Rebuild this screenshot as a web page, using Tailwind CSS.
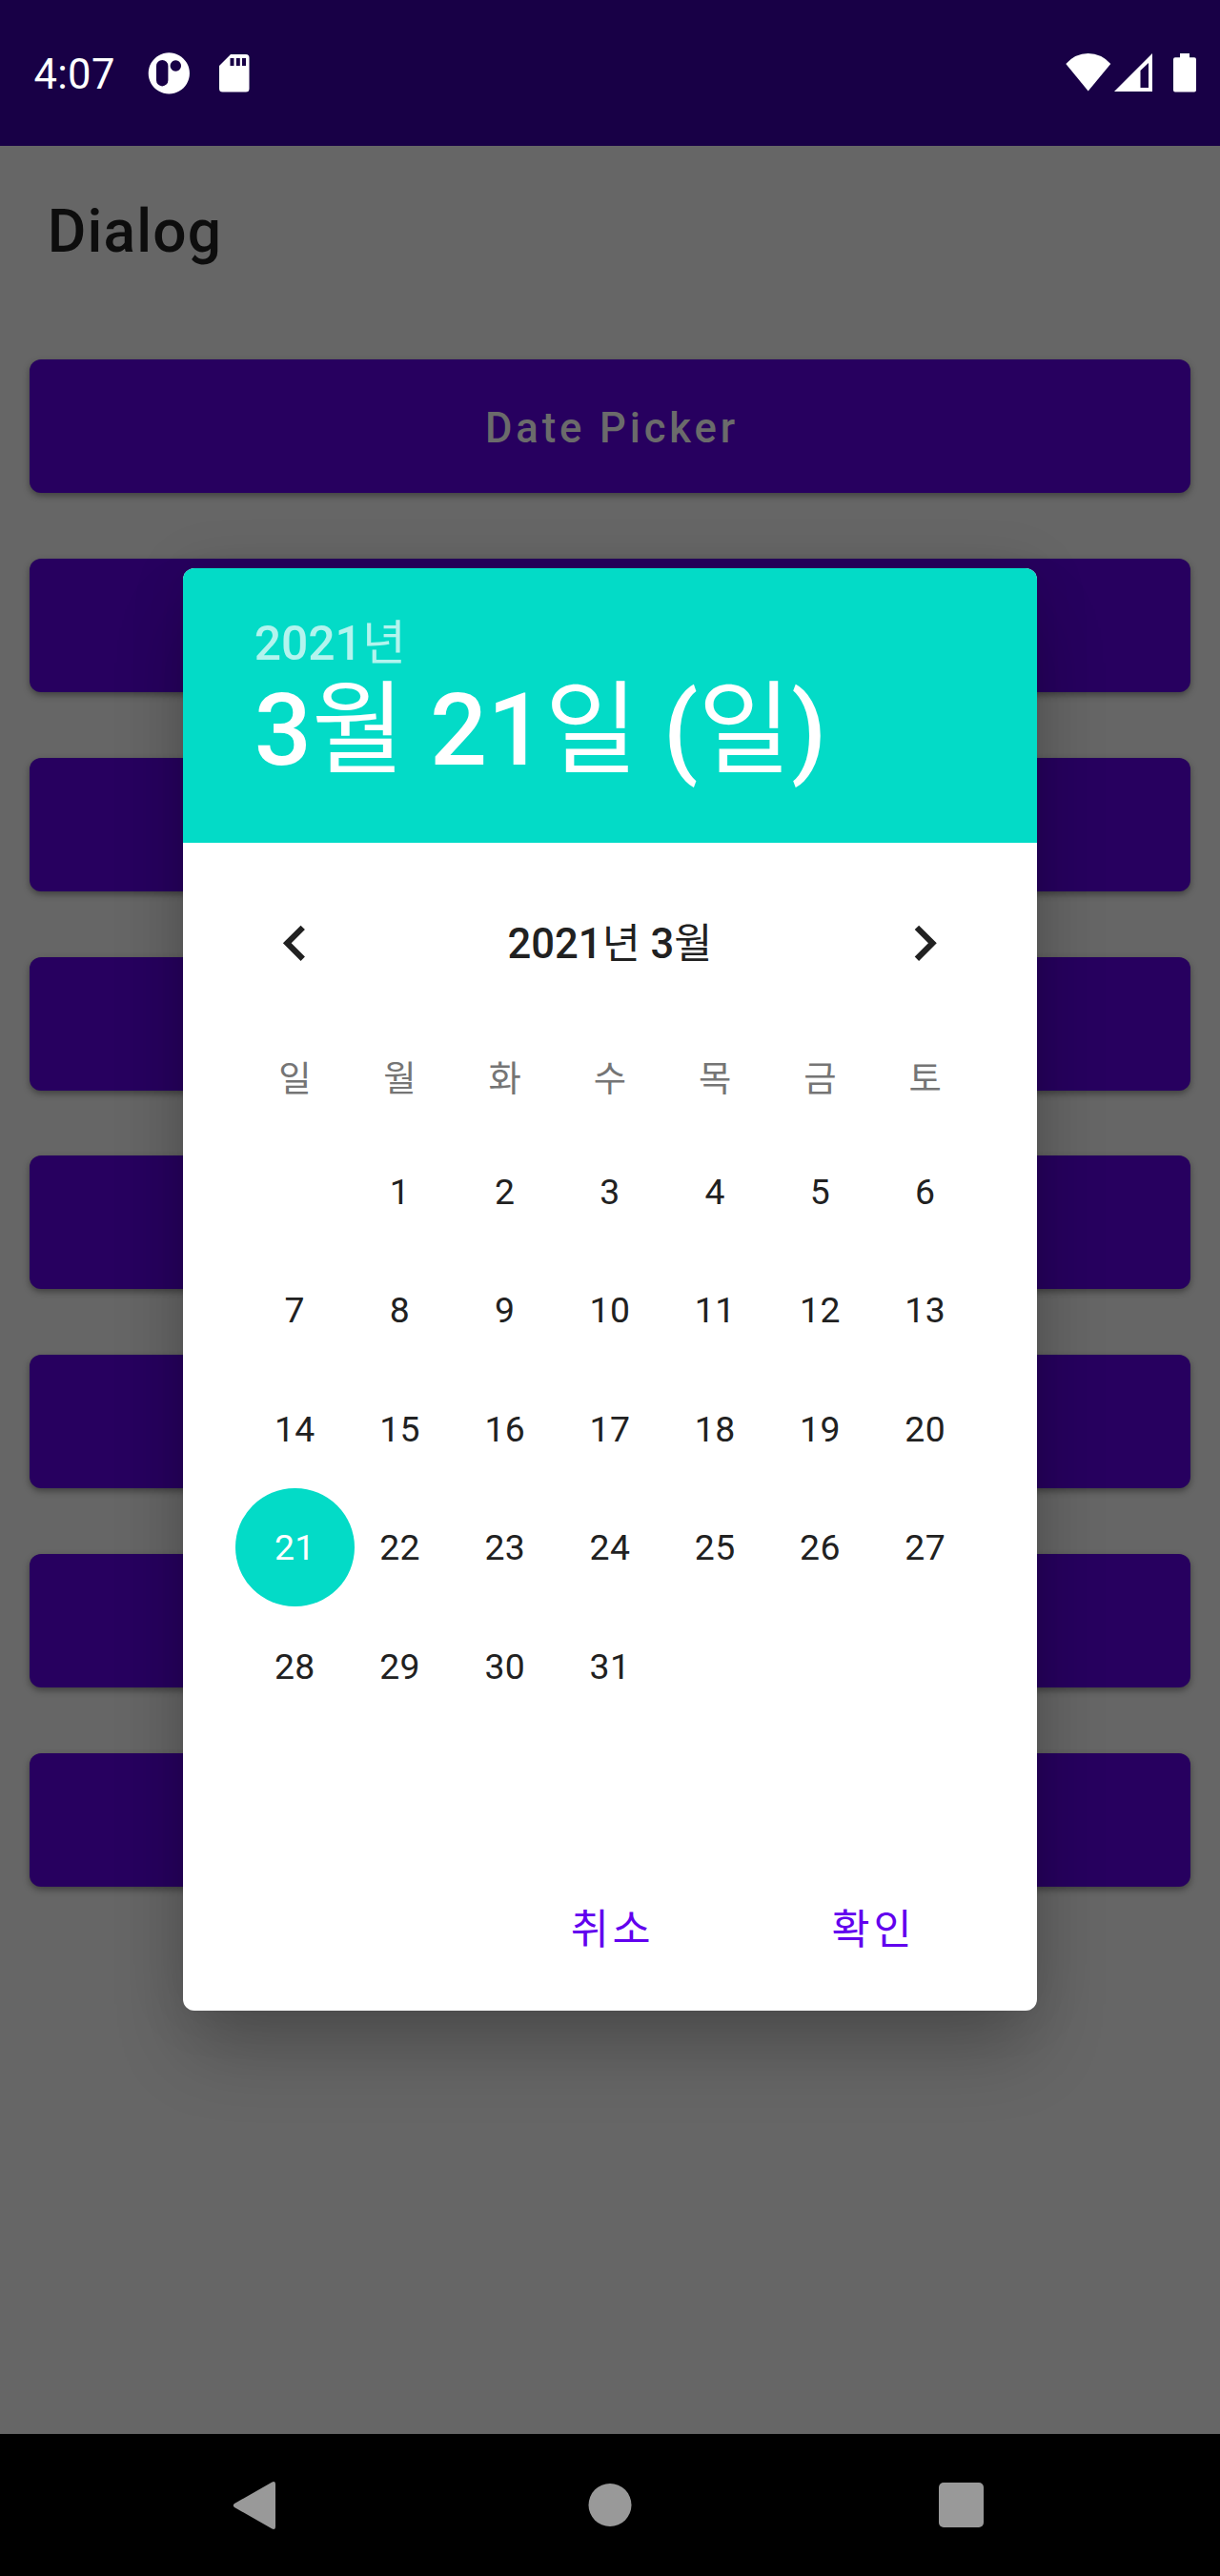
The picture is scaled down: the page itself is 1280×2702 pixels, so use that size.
<!DOCTYPE html>
<html lang="ko">
<head>
<meta charset="utf-8">
<title>Dialog</title>
<script src="https://cdn.jsdelivr.net/npm/@tailwindcss/browser@4"></script>
</head>
<body class="bg-[#666666]">
<div class="relative flex h-[2702px] w-[1280px] flex-col overflow-hidden bg-[#666666] font-['Roboto','Noto_Sans_CJK_KR',sans-serif]">
  <!-- status bar -->
  <header class="flex h-[153px] shrink-0 items-center justify-between bg-[#180046] pl-[35px] pr-[24px] text-white">
    <div class="flex items-center">
      <span class="w-[120px] text-[43.550px] leading-[51px] tracking-[0.300px] translate-x-[0.500px] translate-y-[2px]">4:07</span>
      <svg class="h-[44px] w-[44px]" viewBox="155 55 44 44"><path fill="currentColor" fill-rule="evenodd" d="M177.300 55.300a21.600 21.600 0 1 0 .01 0zM170.200 63a6.200 6.200 0 0 1 6.200 6.200v15a6.200 6.200 0 0 1-12.400 0v-15a6.200 6.200 0 0 1 6.200-6.200zM184.300 63.300a5.700 5.700 0 1 1-.01 0z"/></svg>
      <svg class="ml-[30px] h-[44px] w-[34px]" viewBox="229 55 34 44"><path fill="currentColor" fill-rule="evenodd" d="M242 57h16a3.500 3.500 0 0 1 3.500 3.500v32.500a3.500 3.500 0 0 1-3.500 3.500h-24.500a3.500 3.500 0 0 1-3.500-3.500v-24zM241.500 61v8h4v-8zM247.800 61v8h4v-8zM254 61v8h4v-8z"/></svg>
    </div>
    <svg class="h-[44px] w-[139px]" viewBox="1117 55 139 44" fill="currentColor">
      <path d="M1118.300 67Q1128 56 1141.700 56T1165.300 67L1141.700 95.600z"/>
      <path fill-rule="evenodd" d="M1169 96L1209 56V96zM1196.500 74V92H1205V66z"/>
      <path d="M1238 56h10v4.200h5a2 2 0 0 1 2 2v32.300a2 2 0 0 1-2 2h-20a2 2 0 0 1-2-2v-32.300a2 2 0 0 1 2-2h5z"/>
    </svg>
  </header>

  <!-- screen behind the dialog -->
  <main class="flex flex-1 flex-col">
    <h1 class="flex h-[180px] items-center pl-[49.800px] text-[62.200px] font-medium tracking-[1.150px] text-[#0d0d0d]">Dialog</h1>
    <div class="mt-[44px] flex flex-col gap-[68.850px] px-[31px]">
      <div class="flex h-[140px] items-center justify-center rounded-[12px] bg-[#27005f] text-[43.550px] font-medium tracking-[3.890px] text-[#6b6b6b] shadow-[0_3px_7px_rgba(0,0,0,0.38)]"><span class="translate-x-[2px] translate-y-[3px]">Date Picker</span></div>
      <div class="h-[140px] rounded-[12px] bg-[#27005f] shadow-[0_3px_7px_rgba(0,0,0,0.38)]"></div>
      <div class="h-[140px] rounded-[12px] bg-[#27005f] shadow-[0_3px_7px_rgba(0,0,0,0.38)]"></div>
      <div class="h-[140px] rounded-[12px] bg-[#27005f] shadow-[0_3px_7px_rgba(0,0,0,0.38)]"></div>
      <div class="h-[140px] rounded-[12px] bg-[#27005f] shadow-[0_3px_7px_rgba(0,0,0,0.38)]"></div>
      <div class="h-[140px] rounded-[12px] bg-[#27005f] shadow-[0_3px_7px_rgba(0,0,0,0.38)]"></div>
      <div class="h-[140px] rounded-[12px] bg-[#27005f] shadow-[0_3px_7px_rgba(0,0,0,0.38)]"></div>
      <div class="h-[140px] rounded-[12px] bg-[#27005f] shadow-[0_3px_7px_rgba(0,0,0,0.38)]"></div>
    </div>
  </main>

  <!-- system navigation -->
  <nav class="flex h-[149px] shrink-0 items-center justify-between bg-black pl-[243px] pr-[248px] text-[#999999]">
    <svg class="h-[54px] w-[48px]" viewBox="0 0 48 54"><path fill="currentColor" d="M3 25L42.500 2.500Q46 1 46 5V49Q46 53 42.500 51.500L3 29Q.5 27 3 25z"/></svg>
    <div class="h-[45px] w-[45px] translate-x-[1.500px] rounded-full bg-[#999999]"></div>
    <div class="h-[47px] w-[47px] rounded-[5px] bg-[#999999]"></div>
  </nav>

  <!-- date picker dialog -->
  <section class="absolute left-[192px] top-[595.500px] flex h-[1513.500px] w-[896px] flex-col rounded-[12px] bg-white text-[#212121] shadow-[0_46px_80px_-8px_rgba(0,0,0,0.24),0_0_60px_rgba(0,0,0,0.10)]">
    <div class="h-[288px] shrink-0 rounded-t-[12px] bg-[#03dbc7] pl-[74.700px] pt-[50px] font-medium text-white">
      <div class="text-[49.800px] leading-[58px] text-white/70">2021<span class="font-normal">년</span></div>
      <div class="text-[105.800px] leading-[124px] tracking-[0.200px] whitespace-nowrap">3<span class="font-normal">월</span> 21<span class="font-normal">일</span> (<span class="font-normal">일</span>)</div>
    </div>
    <div class="mx-[62.200px] mt-[44px] grid h-[124px] shrink-0 grid-cols-7 items-center">
      <svg class="h-[74.660px] w-[74.660px] justify-self-center" viewBox="0 0 24 24"><path fill="currentColor" d="M15.410 7.410L14 6l-6 6 6 6 1.410-1.410L10.830 12z"/></svg>
      <div class="col-span-5 text-center text-[43.550px] font-medium leading-[50px] translate-y-[0.500px]">2021<span class="font-normal">년</span> 3<span class="font-normal">월</span></div>
      <svg class="h-[74.660px] w-[74.660px] justify-self-center" viewBox="0 0 24 24"><path fill="currentColor" d="M10 6L8.590 7.410 13.170 12l-4.580 4.590L10 18l6-6z"/></svg>
    </div>
    <div class="mx-[62.200px] mt-[40px] grid h-[80px] shrink-0 grid-cols-7 items-center text-center text-[37.330px] leading-[44px] text-[#757575]">
      <span>일</span><span>월</span><span>화</span><span>수</span><span>목</span><span>금</span><span>토</span>
    </div>
    <div class="mx-[62.200px] mt-[16.200px] grid shrink-0 auto-rows-[124.450px] grid-cols-7 items-center justify-items-center text-[37.330px] leading-[44px] tracking-[0.400px]">
      <span></span><span>1</span><span>2</span><span>3</span><span>4</span><span>5</span><span>6</span>
      <span>7</span><span>8</span><span>9</span><span>10</span><span>11</span><span>12</span><span>13</span>
      <span>14</span><span>15</span><span>16</span><span>17</span><span>18</span><span>19</span><span>20</span>
      <span class="-mx-[8px] flex h-[124.450px] w-[124.450px] items-center justify-center rounded-full bg-[#03dbc7] text-white">21</span><span>22</span><span>23</span><span>24</span><span>25</span><span>26</span><span>27</span>
      <span>28</span><span>29</span><span>30</span><span>31</span>
    </div>
    <div class="mt-auto mb-[59px] flex h-[50px] shrink-0 justify-end gap-[186px] pr-[127.500px] text-[43.550px] leading-[50px] tracking-[3.890px] text-[#6200ee]">
      <span>취소</span><span>확인</span>
    </div>
  </section>
</div>
</body>
</html>
